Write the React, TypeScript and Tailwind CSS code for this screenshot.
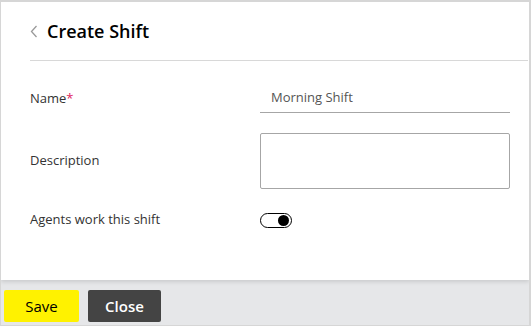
import React, { useState } from "react";

export default function App() {
  const [name, setName] = useState("Morning Shift");
  const [agentsWork, setAgentsWork] = useState(true);

  return (
    <div className="w-[531px] h-[326px] flex flex-col bg-[#e6e7e9] border border-[#d6d6d6] border-t-2 border-r-2 font-['Open_Sans',sans-serif] overflow-hidden">
      <div className="h-[278px] bg-white pl-[29px] pr-[1px] shadow-[0_2px_4px_rgba(0,0,0,0.12)] relative z-10">
        <div className="h-[59px] flex items-center border-b border-[#d8d8d8]">
          <button className="mr-[9px] mt-[1px]">
            <svg width="8" height="13" viewBox="0 0 8 13" fill="none">
              <path d="M6.5 1 L1.5 6.5 L6.5 12" stroke="#9a9a9a" strokeWidth="1.3" />
            </svg>
          </button>
          <h1 className="text-[18px] font-semibold text-black leading-none">Create Shift</h1>
        </div>

        <div className="mt-[25px] flex items-center h-[27px]">
          <label className="w-[230px] text-[13px] text-[#333] -mt-[2px]">
            Name<span className="text-[#e0245e]">*</span>
          </label>
          <input
            value={name}
            onChange={(e) => setName(e.target.value)}
            className="w-[250px] h-[27px] border-b border-[#a6a6a6] px-[11px] pb-[4px] text-[13px] text-[#555] outline-none"
          />
        </div>

        <div className="mt-[20px] flex items-center h-[56px]">
          <label className="w-[230px] text-[13px] text-[#333]">Description</label>
          <textarea className="w-[250px] h-[56px] border border-[#a6a6a6] rounded-[2px] resize-none outline-none p-2 text-[13px]" />
        </div>

        <div className="mt-[23px] flex items-center h-[16px]">
          <label className="w-[230px] text-[13px] text-[#333]">Agents work this shift</label>
          <button
            onClick={() => setAgentsWork(!agentsWork)}
            className={`w-[32px] h-[15px] rounded-full border border-black bg-white flex items-center px-[2px] ${agentsWork ? "justify-end" : "justify-start"}`}
          >
            <span className="w-[11px] h-[11px] rounded-full bg-black" />
          </button>
        </div>
      </div>

      <div className="flex gap-[9px] pl-[3px] pt-[10px]">
        <button className="w-[75px] h-[32px] bg-[#fff200] rounded-[2px] text-[15px] text-black">Save</button>
        <button className="w-[73px] h-[32px] bg-[#444444] rounded-[2px] text-[15px] font-semibold text-white">Close</button>
      </div>
    </div>
  );
}
